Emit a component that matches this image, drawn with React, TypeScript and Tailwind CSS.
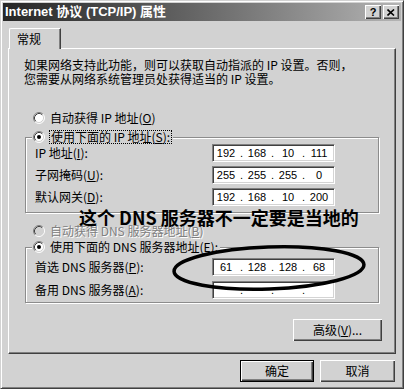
import { Fragment, type ReactNode } from 'react';

function Radio({ checked, disabled }: { checked?: boolean; disabled?: boolean }) {
	return (
		<svg width="12" height="12" viewBox="0 0 12 12" className="shrink-0">
			<circle cx="6" cy="6" r="5" fill={disabled ? '#d2d2d2' : '#fff'} />
			<path d="M2.11 9.89A5.5 5.5 0 0 1 9.89 2.11" fill="none" stroke="#808080" />
			<path d="M9.89 2.11A5.5 5.5 0 0 1 2.11 9.89" fill="none" stroke="#fff" />
			<path d="M2.82 9.18A4.5 4.5 0 0 1 9.18 2.82" fill="none" stroke="#404040" />
			<path d="M9.18 2.82A4.5 4.5 0 0 1 2.82 9.18" fill="none" stroke="#d2d2d2" />
			{checked && <circle cx="6" cy="6" r="2" fill="#000" />}
		</svg>
	);
}

function IpBox({ parts }: { parts: string[] }) {
	return (
		<div className="flex h-[18px] w-[123px] items-center border border-t-[#808080] border-l-[#808080] border-r-white border-b-white bg-white pl-px font-['Liberation_Sans',sans-serif] text-[11px] leading-[14px] shadow-[inset_1px_1px_0_#404040,inset_-1px_-1px_0_#d4d4d4]">
			{parts.map((p, i) => (
				<Fragment key={i}>
					{i > 0 && <span className="w-[7px] text-center">.</span>}
					<span className="w-[24px] text-center">{p}</span>
				</Fragment>
			))}
		</div>
	);
}

function Row({ label, parts }: { label: ReactNode; parts: string[] }) {
	return (
		<div className="flex items-center pl-[3px]">
			<span className="w-[177px]">{label}</span>
			<IpBox parts={parts} />
		</div>
	);
}

function Button({ children, primary, className }: { children: ReactNode; primary?: boolean; className?: string }) {
	return (
		<div
			className={
				(primary
					? 'border border-black shadow-[inset_1px_1px_0_#fff,inset_-1px_-1px_0_#404040,inset_-2px_-2px_0_#808080] '
					: 'shadow-[inset_1px_1px_0_#fff,inset_-1px_-1px_0_#404040,inset_-2px_-2px_0_#808080] ') +
				'flex h-[22px] items-center justify-center ' +
				(className ?? '')
			}
		>
			{children}
		</div>
	);
}

export default function App() {
	return (
		<div className="relative h-[389px] w-[404px] overflow-hidden border border-t-[#d2d2d2] border-l-[#d2d2d2] border-r-[#404040] border-b-[#404040] bg-[#d2d2d2] p-[2px] font-['Noto_Sans_CJK_SC',sans-serif] text-[12px] leading-[14px] text-black shadow-[inset_1px_1px_0_#fff,inset_-1px_-1px_0_#808080]">
			{/* Title bar */}
			<div className="flex h-[18px] items-center bg-linear-to-r from-[#262626] to-[#b4b4b4] pl-[2px] pr-[2px]">
				<span className="font-['Liberation_Sans','Noto_Sans_CJK_SC',sans-serif] text-[13px] font-bold text-white">
					Internet 协议 (TCP/IP) 属性
				</span>
				<div className="ml-auto flex gap-[2px]">
					<div className="flex h-[14px] w-[16px] items-center justify-center bg-[#d2d2d2] font-['Liberation_Sans',sans-serif] text-[11px] font-bold leading-none shadow-[inset_1px_1px_0_#fff,inset_-1px_-1px_0_#404040,inset_-2px_-2px_0_#808080]">
						?
					</div>
					<div className="flex h-[14px] w-[16px] items-center justify-center bg-[#d2d2d2] shadow-[inset_1px_1px_0_#fff,inset_-1px_-1px_0_#404040,inset_-2px_-2px_0_#808080]">
						<svg width="8" height="7" viewBox="0 0 8 7">
							<path d="M0.5 0.5L7 6.5M7 0.5L0.5 6.5" stroke="#000" strokeWidth="1.6" />
						</svg>
					</div>
				</div>
			</div>

			{/* Body */}
			<div className="px-[5px]">
				<div className="relative z-10 -mb-px mt-[7px] ml-px h-[21px] w-[52px] rounded-tl-[2px] border-t border-l border-r border-t-white border-l-white border-r-[#404040] bg-[#d2d2d2] pl-[7px] pt-[3px] shadow-[inset_-1px_0_0_#808080]">
					常规
				</div>
				<div className="h-[306px] w-[388px] border border-t-white border-l-white border-r-[#404040] border-b-[#404040] shadow-[inset_-1px_-1px_0_#808080]">
					<div className="pl-[15px] pt-[9px]">
						<p>如果网络支持此功能，则可以获取自动指派的 IP 设置。否则，</p>
						<p>您需要从网络系统管理员处获得适当的 IP 设置。</p>
					</div>

					<div className="mt-[25px] ml-[24px] flex items-center gap-[5px]">
						<Radio />
						<span>
							自动获得 IP 地址(<u>O</u>)
						</span>
					</div>

					<fieldset className="mt-[5px] ml-[16px] w-[354px] border border-[#8c8c8c] pb-[6px] pl-[6px] shadow-[inset_1px_1px_0_#fff,1px_1px_0_#fff]">
						<legend className="bg-[#d2d2d2] px-px">
							<div className="flex items-center gap-[4px]">
								<Radio checked />
								<span className="border border-dotted border-black px-px leading-[12px]">
									使用下面的 IP 地址(<u>S</u>):
								</span>
							</div>
						</legend>
						<div className="flex flex-col gap-[4px]">
							<Row label={<>IP 地址(<u>I</u>):</>} parts={['192', '168', '10', '111']} />
							<Row label={<>子网掩码(<u>U</u>):</>} parts={['255', '255', '255', '0']} />
							<Row label={<>默认网关(<u>D</u>):</>} parts={['192', '168', '10', '200']} />
						</div>
					</fieldset>

					<div className="mt-[11px] ml-[24px] flex items-center gap-[5px] text-[#808080] [text-shadow:1px_1px_0_#fff]">
						<Radio disabled />
						<span>
							自动获得 DNS 服务器地址(<u>B</u>)
						</span>
					</div>

					<fieldset className="mt-[2px] ml-[16px] w-[354px] border border-[#8c8c8c] pb-[3px] pl-[6px] shadow-[inset_1px_1px_0_#fff,1px_1px_0_#fff]">
						<legend className="bg-[#d2d2d2] px-px">
							<div className="flex items-center gap-[5px]">
								<Radio checked />
								<span className="pr-px">
									使用下面的 DNS 服务器地址(<u>E</u>):
								</span>
							</div>
						</legend>
						<div className="mt-[4px] flex flex-col gap-[5px]">
							<Row label={<>首选 DNS 服务器(<u>P</u>):</>} parts={['61', '128', '128', '68']} />
							<Row label={<>备用 DNS 服务器(<u>A</u>):</>} parts={['', '', '', '']} />
						</div>
					</fieldset>

					<div className="mt-[16px] mr-[13px] flex justify-end">
						<Button className="w-[89px]">
							高级(<u>V</u>)...
						</Button>
					</div>
				</div>

				<div className="mt-[6px] mr-px flex justify-end gap-[6px]">
					<Button primary className="w-[74px]">
						确定
					</Button>
					<Button className="w-[75px]">取消</Button>
				</div>
			</div>

			{/* Annotation overlay */}
			<div className="absolute top-[206px] left-[78px] whitespace-nowrap text-[18px] font-bold leading-[20px] text-black">
				这个 DNS 服务器不一定要是当地的
			</div>
			<svg className="pointer-events-none absolute top-0 left-0" width="404" height="389" viewBox="0 0 404 389">
				<ellipse cx="268" cy="267" rx="95" ry="21" fill="none" stroke="#000" strokeWidth="3.5" transform="rotate(-2 268 267)" />
			</svg>
		</div>
	);
}
